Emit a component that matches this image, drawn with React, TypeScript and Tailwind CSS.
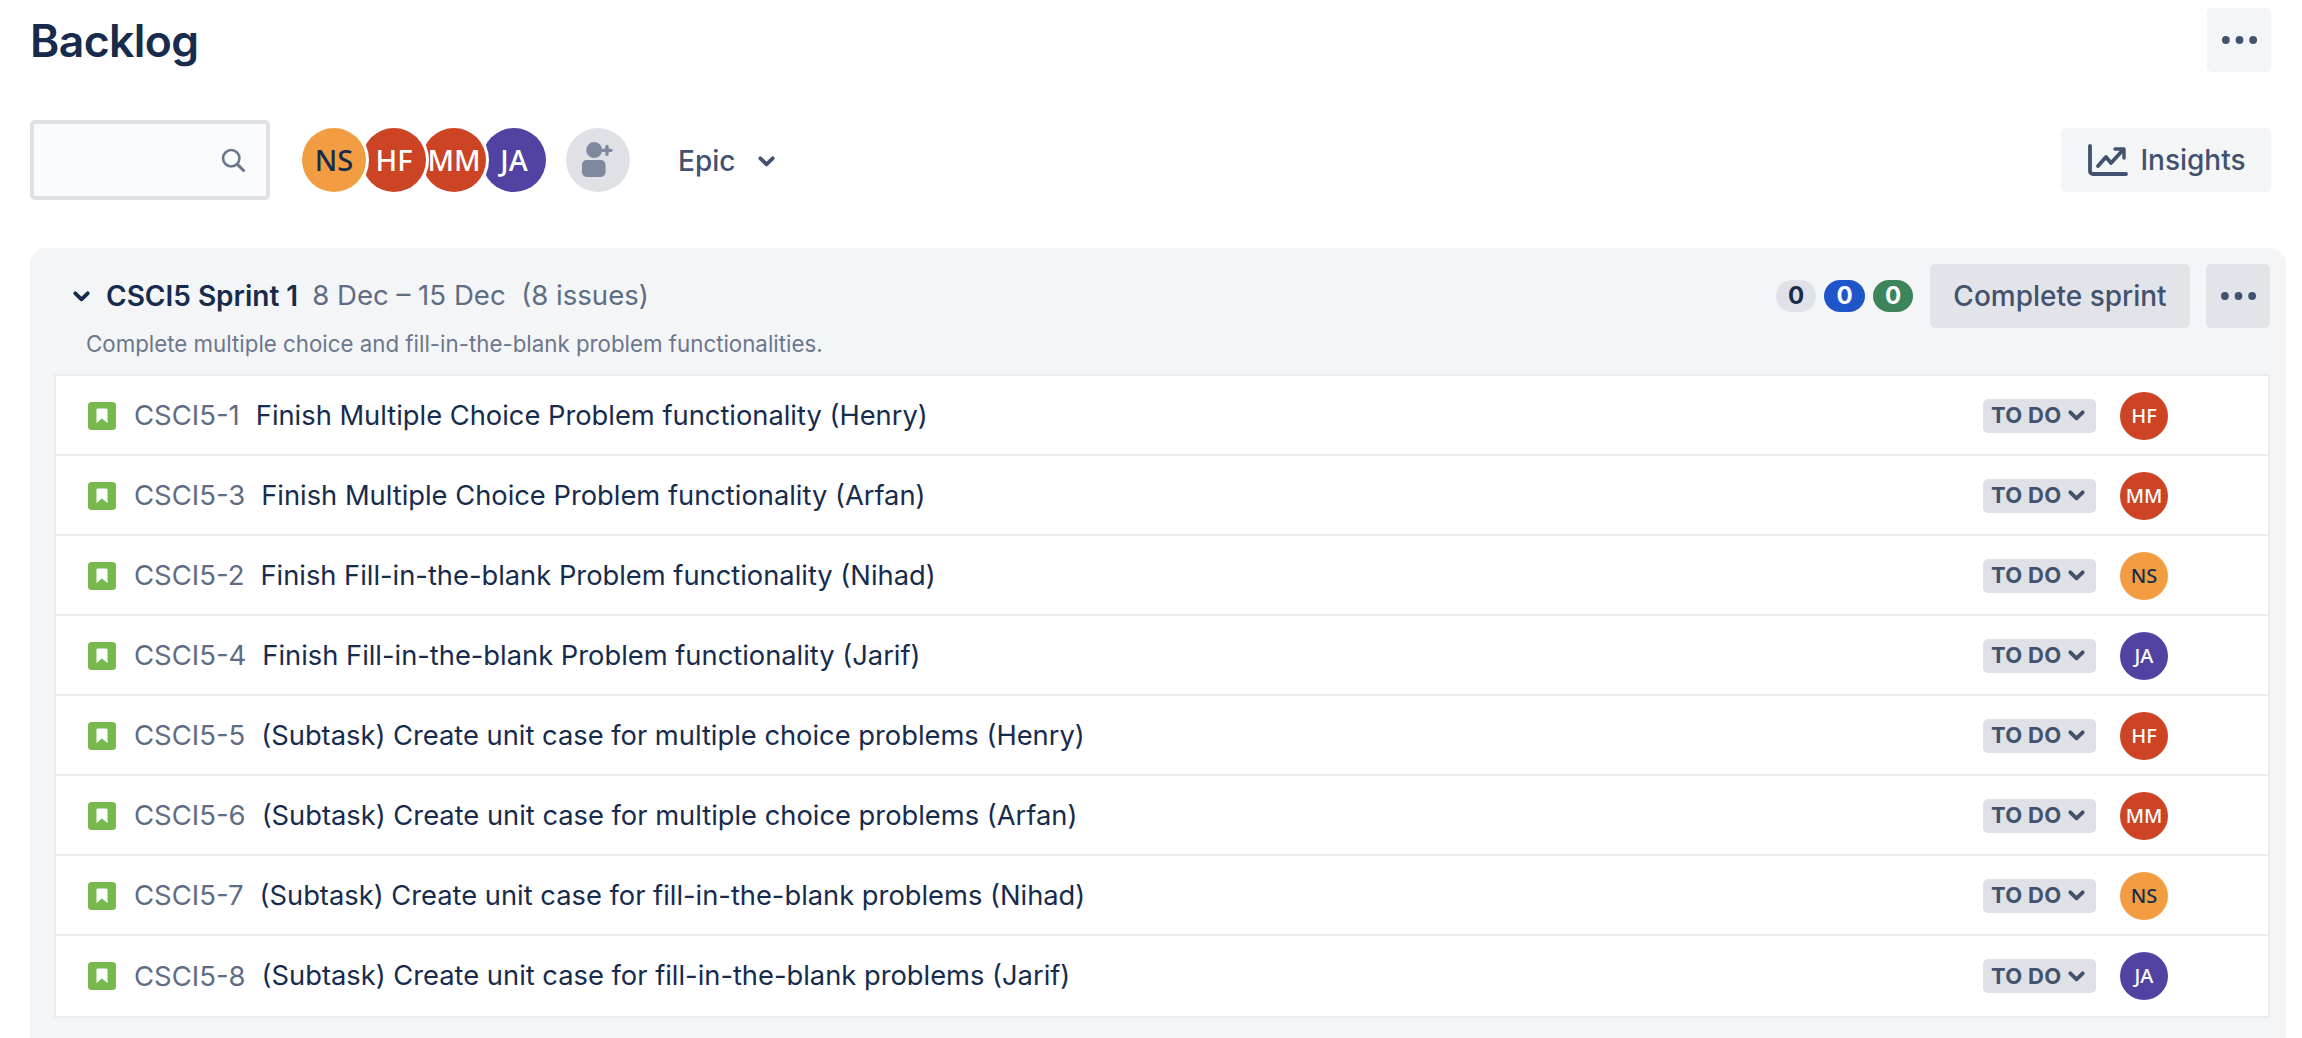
import React from "react";

type Issue = { id: string; title: string; who: string };

const people: Record<string, { bg: string; text: string }> = {
  NS: { bg: "bg-[#f29d41]", text: "text-[#172b4d]" },
  HF: { bg: "bg-[#cc4424]", text: "text-white" },
  MM: { bg: "bg-[#cc4424]", text: "text-white" },
  JA: { bg: "bg-[#5243a3]", text: "text-white" },
};

const issues: Issue[] = [
  { id: "CSCI5-1", title: "Finish Multiple Choice Problem functionality (Henry)", who: "HF" },
  { id: "CSCI5-3", title: "Finish Multiple Choice Problem functionality (Arfan)", who: "MM" },
  { id: "CSCI5-2", title: "Finish Fill-in-the-blank Problem functionality (Nihad)", who: "NS" },
  { id: "CSCI5-4", title: "Finish Fill-in-the-blank Problem functionality (Jarif)", who: "JA" },
  { id: "CSCI5-5", title: "(Subtask) Create unit case for multiple choice problems (Henry)", who: "HF" },
  { id: "CSCI5-6", title: "(Subtask) Create unit case for multiple choice problems (Arfan)", who: "MM" },
  { id: "CSCI5-7", title: "(Subtask) Create unit case for fill-in-the-blank problems (Nihad)", who: "NS" },
  { id: "CSCI5-8", title: "(Subtask) Create unit case for fill-in-the-blank problems (Jarif)", who: "JA" },
];

const Chevron = ({ className }: { className: string }) => (
  <svg viewBox="0 0 16 10" fill="none" className={className}>
    <path d="M2.2 2 8 7.6 13.8 2" stroke="currentColor" strokeWidth="3.6" strokeLinecap="round" strokeLinejoin="round" />
  </svg>
);

const Dots = () => (
  <svg viewBox="0 0 38 10" className="w-[37px] h-[10px] text-[#42526e]" fill="currentColor">
    <circle cx="5" cy="5" r="4" />
    <circle cx="19" cy="5" r="4" />
    <circle cx="33" cy="5" r="4" />
  </svg>
);

const StoryIcon = () => (
  <svg viewBox="0 0 28 28" className="w-7 h-7 shrink-0">
    <rect width="28" height="28" rx="3.5" fill="#78b94f" />
    <path d="M8.5 7.5a1 1 0 0 1 1-1h9a1 1 0 0 1 1 1v13.4L14 16.6l-5.5 4.3z" fill="#fff" />
  </svg>
);

const Avatar = ({ who, className }: { who: string; className: string }) => (
  <div
    className={`rounded-full flex items-center justify-center font-['Noto_Sans','Open_Sans',sans-serif] ${people[who].bg} ${people[who].text} ${className}`}
  >
    {who}
  </div>
);

const Row = ({ issue }: { issue: Issue }) => (
  <div className="h-[80px] border-b-2 border-[#ebecf0] flex items-center pt-[1px] pl-[32px] pr-[100px] last:h-[82px] last:pt-0">
    <StoryIcon />
    <span className="ml-[18px] pt-[1px] text-[#5e6c84] text-[27.5px] whitespace-pre">{issue.id}</span>
    <span className="ml-[16px] pt-[1px] text-[#172b4d] text-[27.3px] whitespace-pre">{issue.title}</span>
    <div className="ml-auto flex items-center gap-6">
      <div className="w-[113px] h-[34px] rounded-[5px] bg-[#dfe1e6] flex items-center pl-2 gap-[6px] text-[#42526e]">
        <span className="text-[22px] font-bold tracking-[0.3px] whitespace-pre">TO DO</span>
        <Chevron className="w-[17px] h-[11px]" />
      </div>
      <Avatar who={issue.who} className="w-12 h-12 text-[20px] font-medium" />
    </div>
  </div>
);

export default function App() {
  return (
    <div className="h-screen overflow-hidden bg-white pl-[30px] pr-[16px] flex flex-col font-['Inter',sans-serif]">
      {/* Title */}
      <div className="flex items-start justify-between pt-2 pr-[15px]">
        <h1 className="pt-[2px] text-[44.5px] leading-[62px] font-semibold text-[#172b4d] tracking-[-0.6px]">Backlog</h1>
        <button className="w-16 h-16 rounded-[5px] bg-[#f4f5f7] flex items-center justify-center">
          <Dots />
        </button>
      </div>

      {/* Filters */}
      <div className="mt-[56px] flex items-center pr-[15px] h-16">
        <div className="w-[240px] h-[80px] shrink-0 rounded-[5px] border-[4px] border-[#dfe1e6] bg-[#fafbfc] flex items-center justify-end pr-[19px]">
          <svg viewBox="0 0 24 24" fill="none" className="w-7 h-7 text-[#6b778c]">
            <circle cx="10.5" cy="10.5" r="7" stroke="currentColor" strokeWidth="2.2" />
            <path d="m16 16 5 5" stroke="currentColor" strokeWidth="2.6" strokeLinecap="round" />
          </svg>
        </div>
        <div className="ml-8 flex items-center">
          <Avatar who="NS" className="relative z-40 w-16 h-16 text-[29px] font-medium ring-[3px] ring-white" />
          <Avatar who="HF" className="relative z-30 -ml-1 w-16 h-16 text-[29px] font-medium ring-[3px] ring-white" />
          <Avatar who="MM" className="relative z-20 -ml-1 w-16 h-16 text-[29px] font-medium ring-[3px] ring-white" />
          <Avatar who="JA" className="relative z-10 -ml-1 w-16 h-16 text-[29px] font-medium ring-[3px] ring-white" />
        </div>
        <div className="ml-5 w-16 h-16 rounded-full bg-[#dfe1e6] flex items-center justify-center">
          <svg viewBox="0 0 36 40" className="w-[34px] h-[38px]" fill="#7f899e">
            <circle cx="14" cy="9.5" r="8.5" />
            <rect x="1" y="20" width="25" height="18" rx="5" />
            <rect x="21.5" y="8" width="12" height="3.6" rx="1.8" />
            <rect x="25.7" y="3.8" width="3.6" height="12" rx="1.8" />
          </svg>
        </div>
        <span className="ml-12 pt-[2px] text-[28px] font-medium text-[#42526e]">Epic</span>
        <Chevron className="ml-[23px] mt-[2px] w-[17px] h-[11px] text-[#42526e]" />
        <button className="ml-auto w-[210px] h-16 rounded-[5px] bg-[#f4f5f7] flex items-center justify-center gap-[12px] text-[#42526e]">
          <svg viewBox="0 0 40 32" fill="none" className="ml-[2px] w-10 h-8" stroke="currentColor" strokeLinecap="round" strokeLinejoin="round">
            <path d="M2 2v25a3 3 0 0 0 3 3h33" strokeWidth="3.8" />
            <path d="m10 22 8-9 5 6 12-13" strokeWidth="3.8" />
            <path d="M27 5h9v9" strokeWidth="3.4" />
          </svg>
          <span className="text-[28px] font-medium">Insights</span>
        </button>
      </div>

      {/* Sprint */}
      <div className="mt-[56px] flex-1 bg-[#f4f5f7] rounded-t-[16px] pl-[24px] pr-[16px] pt-4">
        <div className="flex items-start">
          <div className="pl-[19px] flex items-center h-16 self-start">
            <Chevron className="w-[17px] h-[11px] text-[#172b4d]" />
            <span className="ml-[16px] text-[28px] font-semibold text-[#172b4d] whitespace-pre">CSCI5 Sprint 1</span>
            <span className="ml-[14px] text-[27.6px] text-[#5e6c84] whitespace-pre">8 Dec – 15 Dec  (8 issues)</span>
          </div>
          <div className="ml-auto flex items-center h-16">
            <div className="flex gap-2 text-[24px] font-bold leading-none">
              <span className="w-10 h-8 rounded-full bg-[#dfe1e6] text-[#172b4d] flex items-center justify-center">0</span>
              <span className="w-[41px] h-8 rounded-full bg-[#1f55c9] text-white flex items-center justify-center">0</span>
              <span className="w-10 h-8 rounded-full bg-[#3c855b] text-white flex items-center justify-center">0</span>
            </div>
            <button className="ml-[17px] w-[260px] h-16 rounded-[5px] bg-[#e2e4ea] text-[28px] font-medium text-[#42526e]">
              Complete sprint
            </button>
            <button className="ml-4 w-16 h-16 rounded-[5px] bg-[#e2e4ea] flex items-center justify-center">
              <Dots />
            </button>
          </div>
        </div>
        <p className="ml-[32px] -mt-[1px] text-[22.3px] leading-[34px] text-[#6b778c] whitespace-pre">
          Complete multiple choice and fill-in-the-blank problem functionalities.
        </p>
        <div className="mt-[13px] bg-white border-x-2 border-t-2 border-[#ebecf0]">
          {issues.map((i) => (
            <Row key={i.id} issue={i} />
          ))}
        </div>
      </div>
    </div>
  );
}
